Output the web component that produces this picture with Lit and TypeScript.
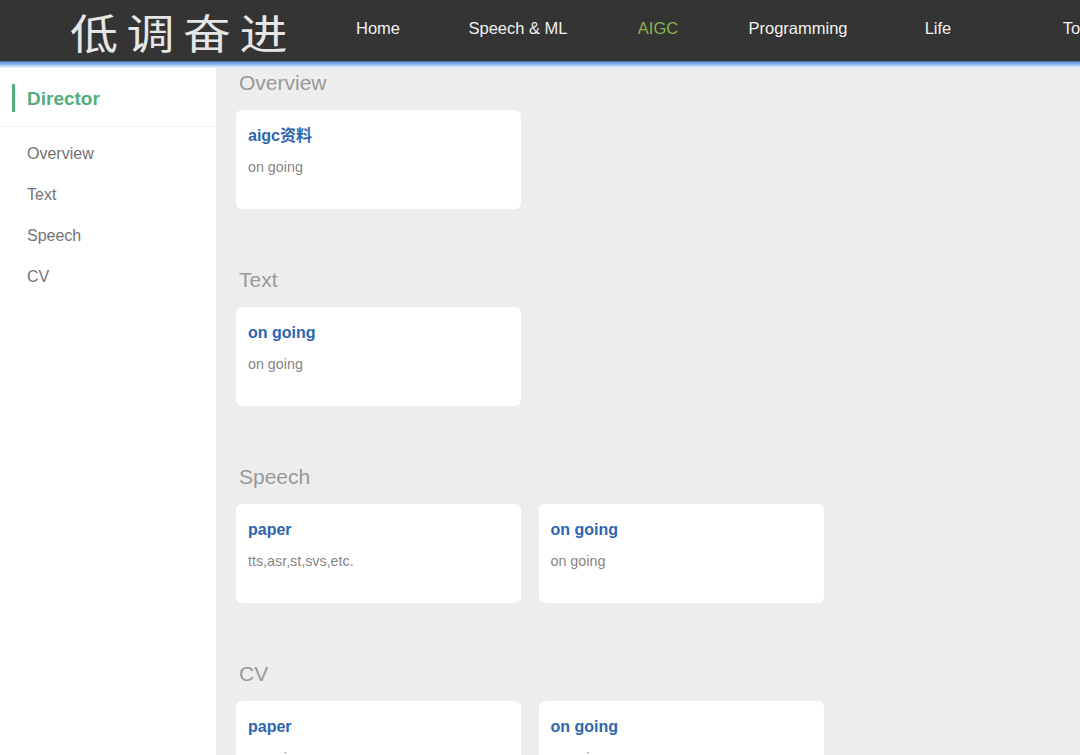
import { LitElement, html, css } from "lit";
import { customElement } from "lit/decorators.js";

const sections = [
  { name: "Overview", cards: [{ t: "aigc资料", d: "on going" }] },
  { name: "Text", cards: [{ t: "on going", d: "on going" }] },
  { name: "Speech", cards: [{ t: "paper", d: "tts,asr,st,svs,etc." }, { t: "on going", d: "on going" }] },
  { name: "CV", cards: [{ t: "paper", d: "on going" }, { t: "on going", d: "on going" }] },
];
const nav = ["Home", "Speech & ML", "AIGC", "Programming", "Life", "Tool"];

@customElement("app-root")
export class AppRoot extends LitElement {
  static styles = css`
    :host { display: block; width: 1080px; height: 755px; overflow: hidden; background: #ededed; font-family: "Liberation Sans", "Noto Sans CJK SC", sans-serif; }
    .top { height: 61px; background: #343434; display: flex; align-items: center; position: relative; z-index: 2; box-shadow: 0 1px 0 #4a78b5, 0 2px 0 #6fa0e0, 0 3px 0 #7dabe6, 0 4px 0 #8fb8ec, 0 5px 0 #adcbf0, 0 6px 0 #cfe0f5, 0 7px 0 #e4ebf4; }
    .logo { width: 308px; flex: none; box-sizing: border-box; padding: 0 0 0 70px; }
    .logo span { display: inline-block; font-family: "Noto Sans CJK SC", sans-serif; font-weight: 400; font-size: 48px; letter-spacing: 8.5px; color: #e6e6e6; white-space: nowrap; line-height: 60px; transform: scaleY(0.86); transform-origin: 50% 52%; }
    .nav { display: flex; flex: none; padding-bottom: 4px; }
    .nav a { width: 140px; text-align: center; color: #f0f0f0; font-size: 16.5px; white-space: nowrap; }
    .nav a.on { color: #8cb04e; }
    .body { display: flex; height: 694px; }
    .side { width: 216px; flex: none; background: #fff; box-sizing: border-box; padding-top: 23px; }
    .brand { height: 42px; border-bottom: 1px solid #f0f0f0; padding-left: 12px; }
    .brand div { height: 28px; border-left: 3px solid #52ae7c; padding-left: 12px; font-size: 19px; font-weight: 700; line-height: 30px; color: #52ae7c; }
    .menu { padding: 6px 0 0 27px; }
    .menu div { height: 41px; line-height: 41px; font-size: 16px; color: #737373; }
    .main { flex: 1; padding: 6px 0 0 20px; display: flex; flex-direction: column; gap: 55px; }
    h2 { margin: 0 0 11px 3px; font-weight: 400; font-size: 21px; line-height: 32px; color: #999; }
    .cards { display: flex; gap: 17.5px; }
    .card { width: 285px; height: 99px; box-sizing: border-box; background: #fff; border-radius: 6px; padding: 15px 12px 0; }
    .t { font-size: 16px; font-weight: 700; line-height: 22px; color: #2c66b0; }
    .d { margin-top: 9px; font-size: 14.3px; line-height: 22px; color: #858585; }
  `;

  render() {
    return html`
      <div class="top">
        <div class="logo"><span>低调奋进</span></div>
        <div class="nav">${nav.map((n) => html`<a class=${n === "AIGC" ? "on" : ""}>${n}</a>`)}</div>
      </div>
      <div class="body">
        <div class="side">
          <div class="brand"><div>Director</div></div>
          <div class="menu">${sections.map((s) => html`<div>${s.name}</div>`)}</div>
        </div>
        <div class="main">
          ${sections.map((s) => html`
            <section>
              <h2>${s.name}</h2>
              <div class="cards">
                ${s.cards.map((c) => html`<div class="card"><div class="t">${c.t}</div><div class="d">${c.d}</div></div>`)}
              </div>
            </section>`)}
        </div>
      </div>
    `;
  }
}
